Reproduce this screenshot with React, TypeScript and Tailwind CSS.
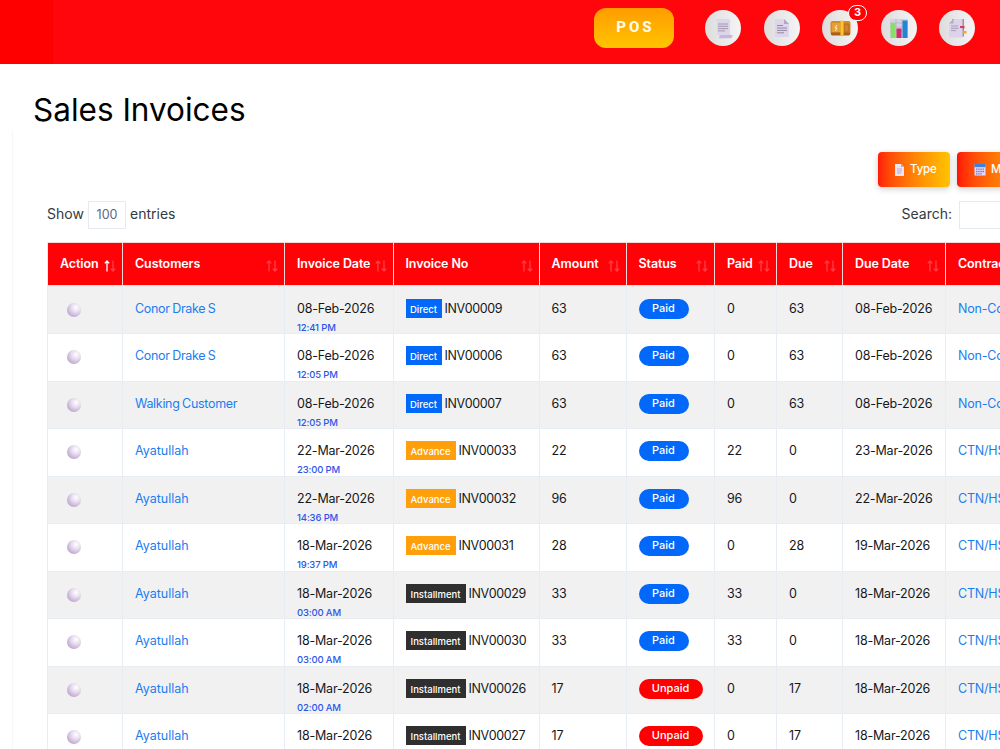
import clsx from "clsx";

type Invoice = {
  customer: string;
  date: string;
  time: string;
  type: "Direct" | "Advance" | "Installment";
  no: string;
  amount: number;
  status: "Paid" | "Unpaid";
  paid: number;
  due: number;
  dueDate: string;
  contract: string;
};

const invoices: Invoice[] = [
  { customer: "Conor Drake S", date: "08-Feb-2026", time: "12:41 PM", type: "Direct", no: "INV00009", amount: 63, status: "Paid", paid: 0, due: 63, dueDate: "08-Feb-2026", contract: "Non-Contract" },
  { customer: "Conor Drake S", date: "08-Feb-2026", time: "12:05 PM", type: "Direct", no: "INV00006", amount: 63, status: "Paid", paid: 0, due: 63, dueDate: "08-Feb-2026", contract: "Non-Contract" },
  { customer: "Walking Customer", date: "08-Feb-2026", time: "12:05 PM", type: "Direct", no: "INV00007", amount: 63, status: "Paid", paid: 0, due: 63, dueDate: "08-Feb-2026", contract: "Non-Contract" },
  { customer: "Ayatullah", date: "22-Mar-2026", time: "23:00 PM", type: "Advance", no: "INV00033", amount: 22, status: "Paid", paid: 22, due: 0, dueDate: "23-Mar-2026", contract: "CTN/HS" },
  { customer: "Ayatullah", date: "22-Mar-2026", time: "14:36 PM", type: "Advance", no: "INV00032", amount: 96, status: "Paid", paid: 96, due: 0, dueDate: "22-Mar-2026", contract: "CTN/HS" },
  { customer: "Ayatullah", date: "18-Mar-2026", time: "19:37 PM", type: "Advance", no: "INV00031", amount: 28, status: "Paid", paid: 0, due: 28, dueDate: "19-Mar-2026", contract: "CTN/HS" },
  { customer: "Ayatullah", date: "18-Mar-2026", time: "03:00 AM", type: "Installment", no: "INV00029", amount: 33, status: "Paid", paid: 33, due: 0, dueDate: "18-Mar-2026", contract: "CTN/HS" },
  { customer: "Ayatullah", date: "18-Mar-2026", time: "03:00 AM", type: "Installment", no: "INV00030", amount: 33, status: "Paid", paid: 33, due: 0, dueDate: "18-Mar-2026", contract: "CTN/HS" },
  { customer: "Ayatullah", date: "18-Mar-2026", time: "02:00 AM", type: "Installment", no: "INV00026", amount: 17, status: "Unpaid", paid: 0, due: 17, dueDate: "18-Mar-2026", contract: "CTN/HS" },
  { customer: "Ayatullah", date: "18-Mar-2026", time: "02:00 AM", type: "Installment", no: "INV00027", amount: 17, status: "Unpaid", paid: 0, due: 17, dueDate: "18-Mar-2026", contract: "CTN/HS" },
];

const columns = ["Action", "Customers", "Invoice Date", "Invoice No", "Amount", "Status", "Paid", "Due", "Due Date", "Contract"];

const gridCols = "grid grid-cols-[75px_162px_108.500px_146px_87px_88.500px_62px_66px_103px_120px]";

const typeStyles = {
  Direct: "w-9 bg-[#0168fa]",
  Advance: "w-[50px] bg-[#ff9f0a]",
  Installment: "w-15 bg-[#2f2f2f]",
};

function SortArrows({ active }: { active?: boolean }) {
  return (
    <svg width="12" height="12" viewBox="0 0 12 12" fill="none" stroke="#fff" strokeWidth="1.3" className="mt-1 shrink-0">
      <path d="M3 11.5V1M.8 3.4 3 1l2.2 2.4" opacity={active ? 1 : 0.25} />
      <path d="M9 .5V11M6.8 8.6 9 11l2.2-2.4" opacity="0.25" />
    </svg>
  );
}

function ScrollIcon() {
  return (
    <svg width="19" height="21" viewBox="0 0 19 21">
      <path d="M1 1h13a2 2 0 0 1 2 2v14H3V3.500A2.500 2.500 0 0 0 1 1z" fill="#ddd5ea" />
      <path d="M5 17h13.500c0 2-.8 3.200-2.500 3.200H4.500A2 2 0 0 0 5 17z" fill="#c6b6df" />
      <path d="M4 6h10M4 8.300h10M4 10.600h10M4 12.900h7" stroke="#9d92a8" strokeWidth="0.9" />
    </svg>
  );
}

function PageIcon() {
  return (
    <svg width="16" height="20" viewBox="0 0 16 20">
      <path d="M1 1h9l5 5v13H1z" fill="#ddd5ea" />
      <path d="M10 1l5 5h-5z" fill="#b5a6c8" />
      <path d="M3 7.500h6M3 10h10M3 12.400h10M3 14.800h7" stroke="#9387a8" strokeWidth="1" />
    </svg>
  );
}

function CardFileIcon() {
  return (
    <svg width="21" height="16" viewBox="0 0 21 16">
      <rect x="0.500" y="1" width="20" height="14" rx="2" fill="#d98a24" />
      <path d="M1 12.500h19v1.500q0 1.500-2 1.500H3q-2 0-2-1.500z" fill="#a9601f" />
      <rect x="2" y="3" width="8" height="9" fill="#e5a03a" />
      <rect x="14" y="4" width="5" height="8" rx="1" fill="#d18227" stroke="#a9601f" strokeWidth="0.7" />
      <rect x="10.500" y="0.500" width="3" height="15" fill="#ffc531" />
      <path d="M7 5 5 8h2l-1.500 3" fill="none" stroke="#fff0c8" />
    </svg>
  );
}

function ChartIcon() {
  return (
    <svg width="20" height="21" viewBox="0 0 20 21">
      <rect x="1" y="1" width="18" height="19" fill="#d6d1e2" />
      <path d="M1 5h18M1 9h18M1 13h18M7 1v19M13 1v19" stroke="#b3adc0" strokeWidth="0.7" />
      <rect x="1.500" y="5" width="5" height="15" fill="#86df69" />
      <rect x="7.500" y="10.500" width="5" height="9.500" fill="#d42a6b" />
      <rect x="13.500" y="2.500" width="5" height="17.500" fill="#2583d6" />
    </svg>
  );
}

function BookmarkTabsIcon() {
  return (
    <svg width="20" height="21" viewBox="0 0 20 21">
      <path d="M5 1h12v17.500H5z" fill="#9c8fae" />
      <path d="M13 8h4.500v2.500H13z" fill="#d73a63" />
      <path d="M15.500 13h4v2.500h-4z" fill="#e9a92c" />
      <path d="M6.500 1h9v18.500H2V5.500z" fill="#dcd3ea" />
      <path d="M6.500 1v4.500H2z" fill="#b7a9c9" />
      <path d="M13 8h3v2h-3z" fill="#d73a63" />
      <path d="M4 8h7M4 10.300h7.500M4 12.600h5" stroke="#a397b3" strokeWidth="0.9" />
    </svg>
  );
}

function CalendarIcon() {
  return (
    <svg width="12" height="12" viewBox="0 0 12 12">
      <rect x="0.500" y="0.500" width="11" height="11" fill="#e6dcfa" />
      <rect x="0.500" y="0" width="11" height="3.200" fill="#3b82dc" />
      <path d="M2 5.200h8M2 7.500h8M2 9.800h6" stroke="#7e71c9" strokeWidth="1.300" strokeDasharray="1.500 0.650" />
    </svg>
  );
}

function Header() {
  const circle = "relative grid h-9 w-9 place-items-center rounded-full bg-linear-to-r from-[#dcdcdc] to-[#f5f5f5]";
  return (
    <header className="flex h-16 bg-[#ff060c]">
      <div className="w-[53px] shrink-0 bg-[#ff0000]" />
      <div className="ml-[541px] flex shrink-0 pt-2">
        <button className="h-10 w-20 rounded-xl bg-linear-to-b from-[#ff9c00] to-[#ffc400] pb-0.5 text-center font-[Roboto] text-[15px] font-extrabold tracking-[3px] text-[#fffbe8]">
          <span className="ml-[3px]">POS</span>
        </button>
        <div className="ml-[31px] flex gap-[22.500px] pt-0.5">
          <div className={circle}><ScrollIcon /></div>
          <div className={circle}><PageIcon /></div>
          <div className={circle}>
            <CardFileIcon />
            <span className="absolute -top-[5px] left-[26px] flex h-4 w-[19px] items-center justify-center rounded-full border border-white bg-[#ff0000] pb-0.5 text-[11px] leading-none font-bold text-white">3</span>
          </div>
          <div className={circle}><ChartIcon /></div>
          <div className={circle}><BookmarkTabsIcon /></div>
        </div>
      </div>
    </header>
  );
}

function InvoiceRow({ invoice, odd }: { invoice: Invoice; odd: boolean }) {
  const cell = "border-r border-[#e8edf3] pt-[13px] pl-3";
  return (
    <div className={clsx(gridCols, "h-[47.560px] border-b border-[#e8edf3] text-[12.500px] leading-[18px] tracking-[-0.2px] whitespace-nowrap text-[#15181b]", odd ? "bg-[#f1f1f1]" : "bg-white")}>
      <div className="border-r border-[#e8edf3] pt-4 pl-[19px]">
        <div className="h-3.5 w-3.5 rounded-full bg-[radial-gradient(circle_at_65%_32%,#ffffff_0%,#e7dcef_35%,#c3add3_72%,#a991ba_100%)]" />
      </div>
      <div className={clsx(cell, "text-[#1c7df0]", invoice.customer.includes(" ") ? "tracking-[-0.3px] [word-spacing:-0.7px]" : "tracking-normal")}>{invoice.customer}</div>
      <div className={cell}>
        <div>{invoice.date}</div>
        <div className="mt-px text-[9.500px] leading-[17px] font-medium tracking-[-0.15px] text-[#2d55ea]">{invoice.time}</div>
      </div>
      <div className={cell}>
        <div className="flex gap-[3px]">
          <span className={clsx("-mt-px h-[19px] text-center text-[9.500px] leading-[21px] font-medium tracking-normal text-white", typeStyles[invoice.type])}>{invoice.type}</span>
          <span className="tracking-[-0.35px]">{invoice.no}</span>
        </div>
      </div>
      <div className={cell}>{invoice.amount}</div>
      <div className={cell}>
        <span className={clsx("-mt-px block h-5 rounded-full text-center text-[11px] leading-[18px] font-medium tracking-normal text-white", invoice.status === "Paid" ? "w-[50px] bg-[#0168fa]" : "w-16 bg-[#ff0000]")}>{invoice.status}</span>
      </div>
      <div className={cell}>{invoice.paid}</div>
      <div className={cell}>{invoice.due}</div>
      <div className={cell}>{invoice.dueDate}</div>
      <div className={clsx(cell, "text-[#1c7df0]")}>{invoice.contract}</div>
    </div>
  );
}

export default function App() {
  return (
    <div className="h-[749px] w-[1000px] overflow-hidden bg-white font-[Inter,sans-serif]">
      <Header />
      <h1 className="h-[66px] pt-[26px] pl-[33px] text-[31.500px] leading-10 text-black">Sales Invoices</h1>

      <main className="ml-3 border-l border-[#f7f7f7] pl-[34px]">
        {/* Filters */}
        <div className="flex gap-[7px] pt-[22px] pl-[831px] text-[11.500px] font-medium tracking-[-0.15px] text-white">
          <button className="flex h-[35px] w-[72px] shrink-0 items-center gap-[5px] rounded bg-linear-to-r from-[#ff1a08] to-[#ffc400] pl-4 shadow-[0_2px_6px_rgba(0,0,0,0.2)]">
            <svg width="11" height="12" viewBox="0 0 11 12" className="shrink-0">
              <path d="M1 0h6l3 3v9H1z" fill="#eee4f5" />
              <path d="M7 0l3 3H7z" fill="#b6a6c5" />
              <path d="M3 5h5M3 7h5M3 9h4" stroke="#a99db8" strokeWidth="0.8" />
            </svg>
            Type
          </button>
          <button className="flex h-[35px] w-[90px] shrink-0 items-center gap-[5px] rounded bg-linear-to-r from-[#ff0d08] to-[#ffc400] pl-[17px] shadow-[0_2px_6px_rgba(0,0,0,0.2)]">
            <CalendarIcon />
            Month
          </button>
        </div>

        {/* Length and search */}
        <div className="flex h-[55px] items-start pt-3.5 text-[14px] leading-[26px] text-[#343a40]">
          <span className="w-[41px]">Show</span>
          <span className="h-7 w-[38px] border border-[#e5e9f2] text-center text-[12.500px] leading-[26px] text-[#596882]">100</span>
          <span className="ml-1">entries</span>
          <span className="ml-auto shrink-0 pr-[7px]">Search:</span>
          <input className="h-7 w-[41px] shrink-0 border border-r-0 border-[#e5e9f2]" />
        </div>

        <div className="w-[1019px] border-l border-[#e8edf3]">
          <div className={clsx(gridCols, "h-11 border-y border-[#f5d8d8] bg-[#ff0208] text-[12.500px] font-semibold tracking-[-0.1px] whitespace-nowrap text-white")}>
            {columns.map((name, i) => (
              <div key={name} className="flex items-center justify-between border-r border-[#ffd8d8] pr-1.5 pl-3">
                <span>{name}</span>
                <SortArrows active={i === 0} />
              </div>
            ))}
          </div>
          <div className="h-[0.500px] bg-[#f1f1f1]" />
          {invoices.map((invoice, i) => (
            <InvoiceRow key={invoice.no} invoice={invoice} odd={i % 2 === 0} />
          ))}
        </div>
      </main>
    </div>
  );
}
